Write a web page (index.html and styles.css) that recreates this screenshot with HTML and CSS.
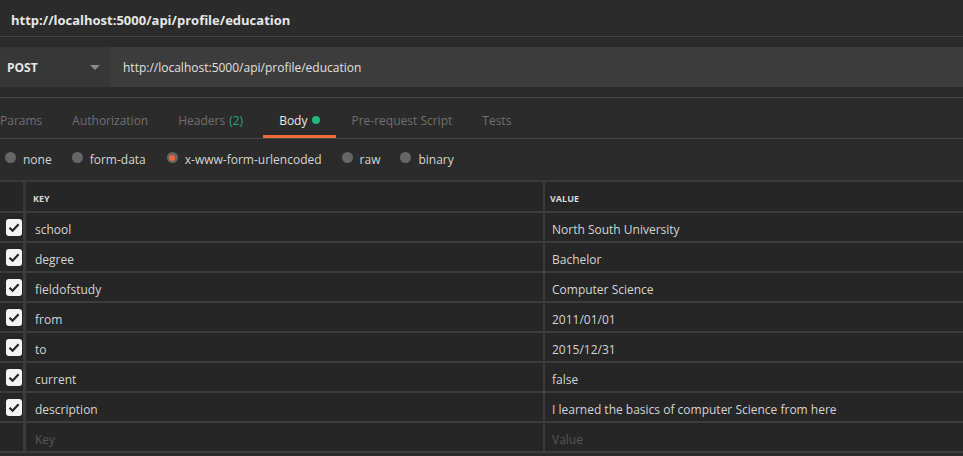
FILE: index.html
```html
<!DOCTYPE html>
<html>
<head>
<meta charset="utf-8">
<link rel="stylesheet" href="styles.css">
</head>
<body>
<div class="app">
  <div class="titlebar">http://localhost:5000/api/profile/education</div>
  <div class="request">
    <div class="method"><span>POST</span><span class="caret"></span></div>
    <div class="url">http://localhost:5000/api/profile/education</div>
  </div>
  <div class="tabs">
    <div class="tab-list">
      <div class="tab">Params</div>
      <div class="tab">Authorization</div>
      <div class="tab">Headers <span class="count">(2)</span></div>
      <div class="tab active">Body <span class="dot"></span></div>
      <div class="tab">Pre-request Script</div>
      <div class="tab">Tests</div>
    </div>
  </div>
  <div class="bodytypes">
    <label class="radio"><span class="circle"></span>none</label>
    <label class="radio"><span class="circle"></span>form-data</label>
    <label class="radio"><span class="circle on"></span>x-www-form-urlencoded</label>
    <label class="radio"><span class="circle"></span>raw</label>
    <label class="radio"><span class="circle"></span>binary</label>
  </div>
  <div class="kv">
    <div class="kv-row head">
      <div class="c-check"></div>
      <div class="c-key">KEY</div>
      <div class="c-val">VALUE</div>
    </div>
    <div class="kv-row"><div class="c-check"><span class="cb"><svg viewBox="0 0 16 16"><path d="M3.5 8.2 L6.6 11.2 L12.6 4.8"/></svg></span></div><div class="c-key">school</div><div class="c-val">North South University</div></div>
    <div class="kv-row"><div class="c-check"><span class="cb"><svg viewBox="0 0 16 16"><path d="M3.5 8.2 L6.6 11.2 L12.6 4.8"/></svg></span></div><div class="c-key">degree</div><div class="c-val">Bachelor</div></div>
    <div class="kv-row"><div class="c-check"><span class="cb"><svg viewBox="0 0 16 16"><path d="M3.5 8.2 L6.6 11.2 L12.6 4.8"/></svg></span></div><div class="c-key">fieldofstudy</div><div class="c-val">Computer Science</div></div>
    <div class="kv-row"><div class="c-check"><span class="cb"><svg viewBox="0 0 16 16"><path d="M3.5 8.2 L6.6 11.2 L12.6 4.8"/></svg></span></div><div class="c-key">from</div><div class="c-val">2011/01/01</div></div>
    <div class="kv-row"><div class="c-check"><span class="cb"><svg viewBox="0 0 16 16"><path d="M3.5 8.2 L6.6 11.2 L12.6 4.8"/></svg></span></div><div class="c-key">to</div><div class="c-val">2015/12/31</div></div>
    <div class="kv-row"><div class="c-check"><span class="cb"><svg viewBox="0 0 16 16"><path d="M3.5 8.2 L6.6 11.2 L12.6 4.8"/></svg></span></div><div class="c-key">current</div><div class="c-val">false</div></div>
    <div class="kv-row"><div class="c-check"><span class="cb"><svg viewBox="0 0 16 16"><path d="M3.5 8.2 L6.6 11.2 L12.6 4.8"/></svg></span></div><div class="c-key">description</div><div class="c-val">I learned the basics of computer Science from here</div></div>
    <div class="kv-row placeholder"><div class="c-check"></div><div class="c-key">Key</div><div class="c-val">Value</div></div>
  </div>
</div>
</body>
</html>
```

FILE: styles.css
```css
* { box-sizing: border-box; }
html, body {
  margin: 0;
  padding: 0;
  background: #2b2b2b;
  height: 100%;
  overflow: hidden;
}
.app {
  font-family: "Open Sans", "Noto Sans", sans-serif;
  font-size: 12px;
  color: #d4d4d4;
  background: #2b2b2b;
}
.titlebar {
  height: 37px;
  padding-left: 11px;
  display: flex;
  align-items: center;
  font-weight: 700;
  font-size: 13px;
  color: #e6e6e6;
  border-bottom: 1px solid #444;
  padding-top: 3px;
}
.request {
  margin-top: 10px;
  height: 40px;
  display: flex;
  margin-bottom: 10px;
}
.method {
  width: 110px;
  background: #373737;
  display: flex;
  align-items: center;
  justify-content: space-between;
  padding: 0 10px 0 7px;
  font-weight: 700;
  font-size: 12px;
  color: #e6e6e6;
}
.caret {
  width: 0; height: 0;
  border-left: 5px solid transparent;
  border-right: 5px solid transparent;
  border-top: 5px solid #8a8a8a;
}
.url {
  flex: 1;
  background: #3c3c3c;
  display: flex;
  align-items: center;
  padding-left: 13px;
  color: #e0e0e0;
}
.tabs {
  border-top: 1px solid #444;
  border-bottom: 1px solid #444;
  height: 42px;
  overflow: hidden;
}
.tab-list {
  display: flex;
  margin-left: -15px;
  height: 40px;
}
.tab {
  padding: 7px 15px 0 15px;
  display: flex;
  align-items: center;
  color: #6f6f6f;
  white-space: nowrap;
  border-bottom: 3px solid transparent;
}
.tab .count { color: #26a876; margin-left: 4px; }
.tab.active {
  color: #e8e8e8;
  border-bottom-color: #f26b3a;
  padding: 7px 16px 0 16px;
  margin-left: 5px;
}
.dot {
  width: 8px; height: 8px;
  border-radius: 50%;
  background: #26b47f;
  margin-left: 5px;
  display: inline-block;
}
.bodytypes {
  height: 43px;
  display: flex;
  align-items: center;
  padding-left: 5px;
  border-bottom: 2px solid #3a3a3a;
}
.radio {
  display: flex;
  align-items: center;
  color: #d4d4d4;
  margin-right: 20px;
}
.radio:nth-child(2) { margin-right: 21px; }
.radio:nth-child(3) { margin-right: 20px; }
.circle {
  width: 11px; height: 11px;
  border-radius: 50%;
  background: #666;
  margin-right: 7px;
  margin-top: -4px;
  display: flex;
  align-items: center;
  justify-content: center;
}
.circle.on::after {
  content: "";
  width: 6px; height: 6px;
  border-radius: 50%;
  background: #f0663a;
}
.kv {
  background: #262626;
}
.kv-row {
  display: grid;
  grid-template-columns: 26px 519px 1fr;
  height: 30px;
  border-bottom: 2px solid #3c3c3c;
}
.kv-row.head { height: 31px; }
.kv-row > div {
  display: flex;
  align-items: center;
  white-space: nowrap;
  overflow: hidden;
}
.kv-row:not(.head) .c-key, .kv-row:not(.head) .c-val { padding-top: 4px; }
.kv-row:not(.head) .c-check { padding-top: 1px; }
.c-check {
  border-right: 3px solid #3c3c3c;
  padding-left: 6px;
}
.c-key {
  border-right: 2px solid #3c3c3c;
  padding-left: 9px;
}
.c-val {
  padding-left: 7px;
}
.head .c-key, .head .c-val {
  font-size: 9px;
  font-weight: 700;
  color: #d8d8d8;
  padding-top: 3px;
}
.head .c-key { padding-left: 7px; }
.head .c-val { padding-left: 5px; }
.head .c-check { border-right-color: #363636; }
.cb {
  width: 16px; height: 17px;
  background: #f4f4f4;
  border-radius: 3px;
  display: block;
}
.cb svg {
  width: 16px; height: 17px;
  display: block;
}
.cb path {
  fill: none;
  stroke: #262626;
  stroke-width: 2.2;
}
.placeholder .c-key, .placeholder .c-val { color: #575757; }
```
